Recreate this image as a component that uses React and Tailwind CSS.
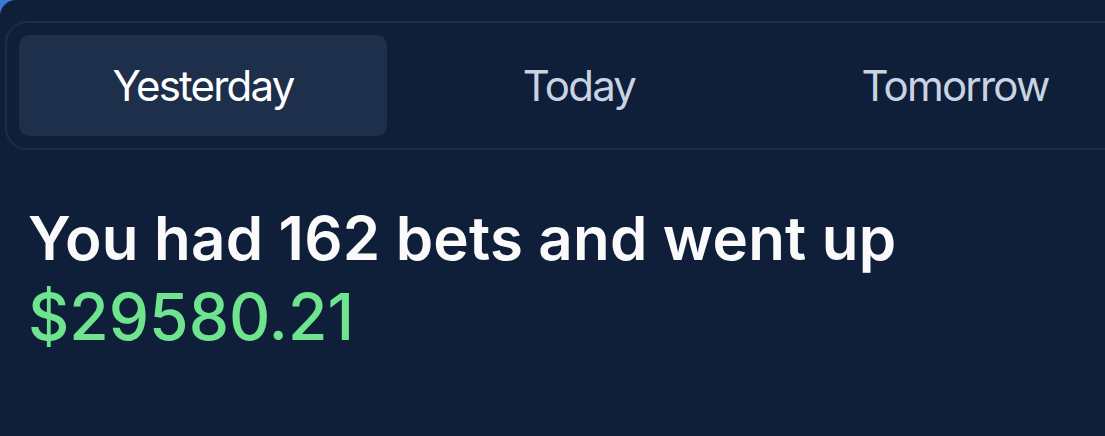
import { useState } from 'react'

const TABS = ['Yesterday', 'Today', 'Tomorrow']

const App = () => {
  const [active, setActive] = useState('Yesterday')

  return (
    <div className="min-h-screen bg-[#3f78d0] overflow-hidden" style={{ fontFamily: 'Inter, "Noto Sans", sans-serif' }}>
      <div className="min-h-screen bg-[#0f1f3a] rounded-tl-[16px] pl-[5px] pt-[21px]">
        <div className="w-[1150px] border-2 border-[#1d2d48] rounded-[22px] p-[12px] flex gap-2">
          {TABS.map(tab => (
            <button
              key={tab}
              onClick={() => setActive(tab)}
              className={`w-[368px] h-[101px] rounded-[10px] flex items-center justify-center text-[42px] tracking-[-1.8px] ${
                active === tab ? 'bg-[#1e2f4b] text-white' : 'text-[#cad3e2]'
              }`}
            >
              {tab}
            </button>
          ))}
        </div>

        <div className="pl-[23px] pt-[53px]">
          <h2 className="text-[60px] font-semibold text-[#fafafa] leading-[70px] tracking-[0.2px]">
            You had 162 bets and went up
          </h2>
          <p className="text-[64px] font-medium text-[#6ee48f] leading-[88px]">
            $29580.21
          </p>
        </div>
      </div>
    </div>
  )
}

export default App
